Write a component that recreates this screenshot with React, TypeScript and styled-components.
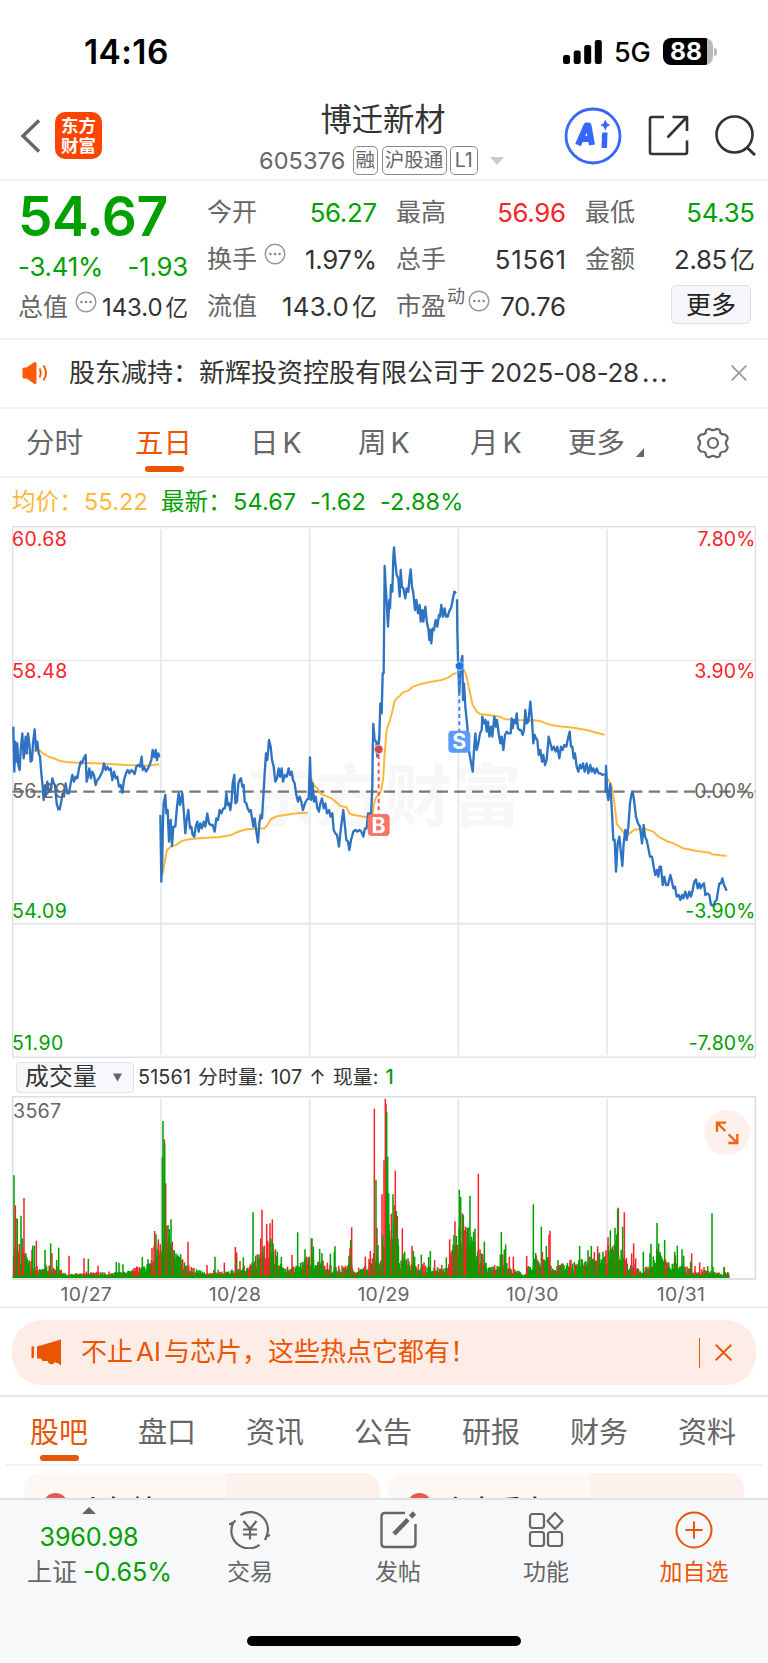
import React from 'react';
import styled, { createGlobalStyle, css } from 'styled-components';

const C = {
  green: '#00a000',
  red: '#f8242a',
  orange: '#ea5504',
  brand: '#ff4400',
  ink: '#333333',
  gray: '#666666',
  line: '#f1f1f4',
};

const Global = createGlobalStyle`
  * { box-sizing: border-box; }
  body { margin: 0; background: #fff; }
  body, svg text { font-family: Inter, "Noto Sans CJK SC", sans-serif; }
  svg { display: block; flex: none; }
`;

const Screen = styled.div`
  width: 768px;
  height: 1663px;
  display: flex;
  flex-direction: column;
  overflow: hidden;
  background: #fff;
  color: ${C.ink};
  white-space: nowrap;
`;

/* ---------- status bar ---------- */
const StatusBar = styled.div`
  height: 90px;
  padding: 13px 51px 0 84px;
  display: flex;
  align-items: center;
  color: #000;
  flex: none;
`;
const Clock = styled.div`
  flex: 1;
  font-size: 33.5px;
  font-weight: 600;
  letter-spacing: 0.4px;
`;
const Network = styled.div`
  width: 38px;
  margin: 1px 11px 0 12px;
  font-size: 27px;
  font-weight: 500;
  letter-spacing: -0.3px;
`;
const Battery = styled.div`
  width: 50px;
  height: 27px;
  border-radius: 8px;
  background: linear-gradient(90deg, #000 44px, #b9b9b9 44px);
  color: #fff;
  font-size: 24.5px;
  font-weight: 700;
  line-height: 27px;
  padding-left: 7px;
`;
const BatteryTip = styled.div`
  width: 3px;
  height: 8px;
  margin-left: 1px;
  border-radius: 0 3px 3px 0;
  background: #b9b9b9;
`;

/* ---------- header ---------- */
const Header = styled.header`
  height: 91px;
  padding: 2px 11px 0 20px;
  display: flex;
  align-items: center;
  border-bottom: 2px solid ${C.line};
  flex: none;
`;
const Logo = styled.div`
  width: 47px;
  height: 47px;
  margin-left: 14px;
  border-radius: 10px;
  background: ${C.brand};
  color: #fff;
  font: 700 17.500px/20px "Noto Sans CJK SC", sans-serif;
  text-align: center;
  padding-top: 3px;
`;
const TitleBlock = styled.div`
  width: 250px;
  height: 88px;
  margin-left: 156px;
  padding-top: 4px;
`;
const Title = styled.div`
  width: 250px;
  text-align: center;
  font-size: 31.3px;
  line-height: 48px;
`;
const CodeRow = styled.div`
  display: flex;
  align-items: center;
  height: 30px;
  margin: 2px 0 0 1px;
  font-size: 23.5px;
  color: ${C.gray};
`;
const Tag = styled.span<{ $w: number }>`
  width: ${(p) => p.$w}px;
  height: 29px;
  margin-right: 3.5px;
  border: 1.5px solid #8a8a8a;
  border-radius: 5px;
  font-size: 19.5px;
  line-height: 26px;
  text-align: center;
`;
const Code = styled.span`
  width: 93.5px;
  letter-spacing: 0.1px;
`;
const HeaderActions = styled.div`
  display: flex;
  align-items: center;
  margin-left: auto;
`;

/* ---------- quote ---------- */
const Quote = styled.section`
  height: 159px;
  padding: 8px 0 0 18px;
  display: grid;
  grid-template-columns: repeat(4, 170px);
  column-gap: 19px;
  border-bottom: 2px solid ${C.line};
  flex: none;
`;
const QuoteCol = styled.div`
  display: flex;
  flex-direction: column;
`;
const BigPrice = styled.div`
  height: 54px;
  font-size: 55px;
  font-weight: 600;
  line-height: 54px;
  letter-spacing: -0.5px;
  color: ${C.green};
`;
const Change = styled.div`
  height: 41px;
  display: flex;
  align-items: center;
  justify-content: space-between;
  padding-top: 6px;
  font-size: 25.8px;
  letter-spacing: -0.2px;
  color: ${C.green};
`;
const Cell = styled.div`
  height: 47.2px;
  display: flex;
  align-items: center;
`;
const Label = styled.span`
  font-size: 25px;
  line-height: 30px;
  margin-top: -2px;
  color: ${C.gray};
`;
const Sup = styled.sup`
  font-size: 18px;
  line-height: 18px;
  color: ${C.gray};
  align-self: flex-start;
  margin: 5px 0 0 1px;
`;
const Value = styled.span<{ $c?: string; $small?: boolean; $ls?: number }>`
  margin: 0 ${(p) => -(p.$ls ?? -0.3)}px 0 auto;
  font-size: ${(p) => (p.$small ? 24 : 25.8)}px;
  line-height: 30px;
  letter-spacing: ${(p) => p.$ls ?? -0.3}px;
  color: ${(p) => p.$c ?? C.ink};
`;
const Unit = styled.span<{ $small?: boolean }>`
  font-size: ${(p) => (p.$small ? 22.5 : 25)}px;
  margin-left: 3px;
`;
const MoreButton = styled.button`
  width: 80px;
  height: 39px;
  margin: -4px 4px 0 auto;
  padding: 0;
  border: 1.5px solid #dcdee6;
  border-radius: 5px;
  background: #f6f7fb;
  font: 25px/34px Inter, "Noto Sans CJK SC", sans-serif;
  color: #222;
`;

/* ---------- notice ---------- */
const Notice = styled.section`
  height: 69px;
  padding: 0 21px 1px 22px;
  display: flex;
  align-items: center;
  border-bottom: 2px solid ${C.line};
  flex: none;
`;
const NoticeText = styled.div`
  flex: 1;
  padding-left: 20px;
  font-size: 26px;
  line-height: 36px;
`;
const NoticeDate = styled.span`
  margin-left: 5px;
  letter-spacing: -0.25px;
`;
const Dots = styled.span`
  margin-left: 3px;
  letter-spacing: 1.6px;
`;

/* ---------- tabs ---------- */
const PeriodTabs = styled.nav`
  height: 69px;
  padding-left: 26px;
  display: grid;
  grid-template-columns: 109px 115px 108px 112px 98px 129px auto;
  justify-content: start;
  border-bottom: 2px solid ${C.line};
  flex: none;
`;
const tabBase = css<{ $on?: boolean }>`
  position: relative;
  justify-self: start;
  font-size: 28.5px;
  line-height: 66px;
  color: ${(p) => (p.$on ? C.orange : C.gray)};
  &::after {
    content: '';
    display: ${(p) => (p.$on ? 'block' : 'none')};
    position: absolute;
    left: 50%;
    bottom: 4px;
    width: 39px;
    height: 6px;
    margin-left: -19px;
    border-radius: 3px;
    background: ${C.orange};
  }
`;
const PeriodTab = styled.a`
  ${tabBase}
  display: flex;
  align-items: center;
  gap: 4px;
`;
const Legend = styled.div`
  height: 48px;
  padding-left: 12px;
  display: flex;
  align-items: center;
  font-size: 23.5px;
  line-height: 32px;
  flex: none;
`;
const LegendItem = styled.span<{ $c: string; $w: number }>`
  width: ${(p) => p.$w}px;
  letter-spacing: 0.1px;
  color: ${(p) => p.$c};
`;

/* ---------- charts ---------- */
const VolumeBar = styled.div`
  height: 38px;
  padding: 0 16px;
  display: flex;
  align-items: center;
  font-size: 19.8px;
  letter-spacing: 0.15px;
  line-height: 26px;
  flex: none;
`;
const IndicatorSelect = styled.div`
  width: 118px;
  height: 31px;
  margin-right: 4px;
  padding: 0 11px 0 8px;
  display: flex;
  align-items: center;
  justify-content: space-between;
  border: 1.5px solid #e0e2e8;
  border-radius: 4px;
  background: #f7f8fb;
  font-size: 23.8px;
  line-height: 28px;
`;
const Reading = styled.span`
  word-spacing: 1.2px;
`;
const Now = styled.span`
  color: ${C.green};
  font-weight: 500;
`;

/* ---------- promo + lower tabs ---------- */
const PromoWrap = styled.section`
  height: 89px;
  padding: 12px 12px 0;
  border-bottom: 2px solid #e6e7ee;
  flex: none;
`;
const Promo = styled.div`
  height: 65px;
  padding: 0 24px 0 19px;
  display: flex;
  align-items: center;
  border-radius: 30px;
  background: #fdede6;
  color: ${C.orange};
  font-size: 26px;
  line-height: 36px;
`;
const PromoText = styled.span`
  flex: 1;
  margin: -1px 0 0 18px;
`;
const Latin = styled.span`
  margin: 0 3px;
`;
const PromoDivider = styled.i`
  width: 1.5px;
  height: 30px;
  margin-right: 15px;
  background: ${C.orange};
`;
const InfoTabs = styled.nav`
  height: 69px;
  margin: 0 6px;
  padding: 0 26px 0 24px;
  display: flex;
  justify-content: space-between;
  border-bottom: 2px solid ${C.line};
  flex: none;
`;
const InfoTab = styled.a`
  ${tabBase}
  line-height: 71px;
  font-size: 29px;
  &::after {
    bottom: 3px;
  }
`;
const Cards = styled.section`
  height: 32px;
  padding: 7px 24px 0;
  display: flex;
  gap: 8px;
  overflow: hidden;
  flex: none;
`;
const Card = styled.div`
  flex: 1;
  height: 80px;
  padding: 20px 0 0 19px;
  display: flex;
  align-items: flex-start;
  gap: 12px;
  border-radius: 15px;
  background: linear-gradient(90deg, #fef8f4 0 57%, #fdf1ee 57%);
  font-size: 26px;
  color: #222;
`;
const CardDot = styled.i`
  width: 25px;
  height: 25px;
  border-radius: 50%;
  background: #e05a52;
`;
const CardTitle = styled.span`
  line-height: 34px;
  font-weight: 500;
`;

/* ---------- bottom bar ---------- */
const BottomBar = styled.footer`
  flex: 1;
  display: flex;
  flex-direction: column;
  align-items: center;
  justify-content: space-between;
  border-top: 2px solid #e2e3e5;
  background: #f7f8fa;
`;
const BottomItems = styled.div`
  width: 768px;
  height: 90px;
  padding-left: 5px;
  display: flex;
`;
const IndexBox = styled.div`
  width: 171px;
  padding: 7px 3px 0 0;
  display: flex;
  flex-direction: column;
  align-items: center;
  color: ${C.green};
  font-size: 25.2px;
  line-height: 35px;
`;
const IndexValue = styled.div`
  margin-top: 6px;
  letter-spacing: -0.2px;
`;
const IndexChange = styled.div`
  margin-left: 21px;
  display: flex;
  align-items: center;
  gap: 6px;
`;
const BottomItem = styled.div<{ $c?: string }>`
  width: 148px;
  padding-top: 11px;
  display: flex;
  flex-direction: column;
  align-items: center;
  font-size: 23px;
  line-height: 34px;
  gap: 6px;
  color: ${(p) => p.$c ?? C.gray};
`;
const HomeBar = styled.div`
  width: 274px;
  height: 10px;
  margin-bottom: 17px;
  border-radius: 5px;
  background: #000;
`;

/* ---------- chart data (three units per pixel) ---------- */
type Pt = [number, number];
const pts = (s: string, dx = 0, dy = 0): Pt[] =>
  s.trim().split(/\s+/).map((p) => {
    const [x, y] = p.split(',').map(Number);
    return [x + dx, y + dy] as Pt;
  });
const path = (p: Pt[]) => 'M' + p.map((a) => a.join(',')).join('L');

const PRICE: Pt[][] = [
  pts(`40,620 43,755 46,665 49,725 52,670 55,735 59,750 62,690 67,640 71,715 77,650 80,700 84,640 88,670 92,725 96,720 99,670 104,628 108,690 112,665 116,700 120,710 124,760 128,800 131,840 134,800 137,830 142,785 147,815 152,815 157,775 161,790 165,795 170,850 175,868 179,868 183,850 188,820 192,830 197,790 202,820 207,820 212,790 217,765 222,785 227,770 232,775 237,745 242,725 246,730 251,715 257,705 260,785 264,770 268,745 273,775 277,755 282,765 287,795 292,780 297,775 302,765 307,755 312,730 317,750 322,740 327,750 332,745 337,780 342,755 347,775 352,770 357,800 362,795 367,818 372,780 378,760 383,750 388,760 394,750 399,755 404,762 409,740 415,735 420,740 425,710 428,750 432,740 438,755 444,745 449,735 454,720 458,690 463,712 467,690 471,720 475,700 478,712`),
  pts(`481,885 484,1085 487,1010 489,900 491,850 496,825 499,880 503,870 507,965 512,900 516,978 520,920 526,920 531,860 536,820 540,855 547,820 551,870 556,940 560,900 565,870 570,925 574,920 578,945 583,950 587,920 592,905 596,935 601,910 606,925 611,905 616,920 622,880 627,910 632,915 638,915 644,935 649,895 654,900 659,870 664,880 670,865 675,865 679,820 683,855 687,850 691,870 695,840 698,790 703,765 706,850 711,845 715,790 719,780 723,775 727,800 731,795 734,845 739,850 743,865 748,875 752,870 757,900 760,920 764,895 769,935 774,968 778,910 782,885 786,895 790,830 794,760 798,700 802,720 807,660 812,680 816,720 821,740 826,785 831,775 836,745 840,770 845,745 849,785 855,765 860,770 866,745 870,765 875,755 879,780 884,790 889,825 894,845 899,830 904,845 909,870 915,850 920,840 925,835`),
  [
    ...pts(`926,840 930,712 934,840 938,790 942,845 947,830 952,865 957,875 961,850 966,835 971,865 976,850 981,880 987,870 992,890 997,880 1001,930 1006,940 1011,945 1017,980 1022,930 1030,870 1034,910 1039,960 1044,965 1048,990 1053,960 1060,935 1066,930 1072,935 1078,930 1084,935 1090,950 1095,925 1100,925 1104,880 1109,880 1113,890`),
    ...pts(`217,800 218,700 220,612 224,660 229,665 232,710 235,690 238,650 241,550 245,580 248,460 251,460 254,138 257,200 260,245 264,320 268,240 270,265 273,195 277,215 280,110 282,82 286,130 290,165 295,175 299,230 302,150 306,200 310,205 316,235 320,205 325,215 329,170 332,148 336,200 340,220 345,270 349,240 354,280 359,255 362,305 367,270 370,305 376,260 381,310 385,325 388,360 391,330 394,370 398,325 402,330 407,300 412,320 417,285 420,290 424,255 429,290 434,265 438,290 443,290 449,270 453,265 458,240 463,215 468,220`, 900),
  ],
  [
    ...pts(`471,238 472,330 474,420 478,520 482,430 487,408 489,540 492,490 496,560 502,620 505,680 510,710 518,755 522,690 526,640 530,690 535,670 540,640 545,630 547,590 552,610 556,600 560,635 564,605 568,650 573,620 577,650 583,590 587,620 591,600 596,640 601,670 605,650 610,690 615,645 620,635 625,640`, 900),
    ...pts(`182,280 185,235 188,265 192,240 197,250 200,220 204,265 208,270 213,270 218,285 222,270 226,210 230,250 235,245 241,185 246,240 250,310 254,285 258,295 262,300 266,345 271,330 276,365 280,345 285,375 290,360 296,290 301,310 306,330 311,320 317,335 322,320 328,355 333,320 338,330 343,315 349,320 354,295 359,275 363,320 367,320 371,355 375,340 380,380 385,395 390,375 394,385 399,370 404,395 410,370 415,400 421,375 425,395 430,385 435,400 440,385 446,400 452,400 457,405 464,402`, 1350, 360),
  ],
  pts(`467,402 467,455 468,378 472,460 475,480 481,432 486,520 490,600 494,600 498,695 503,610 508,590 513,640 517,678 521,610 526,570 530,600 535,560 540,490 545,460 548,455 552,480 558,530 564,550 570,560 576,610 581,555 585,590 590,600 595,625 600,650 606,650 611,680 616,705 621,690 625,710 629,680 633,680 638,735 643,710 648,735 654,735 661,705 665,720 670,745 675,740 680,770 686,765 691,780 696,765 700,775 706,755 712,775 718,755 723,770 728,750 733,725 738,718 743,745 748,730 752,745 757,735 762,730 766,765 772,760 778,765 783,795 789,797 795,785 800,780 803,760 808,730 813,730 817,715 822,735 830,752`, 1350, 360),
];

const AVERAGE: Pt[][] = [
  pts('64,704 80,700 100,694 120,692 128,700 140,706 150,712 165,716 180,723 200,726 230,728 280,730 330,732 380,735 410,736 440,737 478,733'),
  pts('488,1062 495,1020 501,990 512,980 530,974 545,963 570,957 610,954 660,951 695,945 705,939 720,933 740,928 770,926 793,925 803,915 813,897 830,889 860,884 890,880 924,878'),
  [
    ...pts('934,775 941,795 952,805 960,820 975,827 995,835 1010,848 1022,858 1040,862 1048,880 1060,885 1080,888 1095,891 1110,890 1118,880'),
    ...pts('221,860 225,838 232,828 241,818 246,800 250,770 254,700 260,630 270,600 278,570 283,545 290,535 300,527 308,518 325,512 338,500 360,493 390,486 425,480 445,473 460,462 470,460', 900),
  ],
  [
    ...pts('486,440 498,462 508,510 518,555 530,575 540,582 570,586 600,590 615,598 650,600 700,601', 900),
    ...pts('270,243 295,253 320,258 370,263 410,270 440,278 464,284', 1350, 360),
  ],
  pts('470,410 485,440 492,480 498,530 500,552 512,565 522,580 535,583 552,570 570,567 590,568 610,575 625,590 650,603 670,610 700,625 740,633 780,638 785,643 830,648', 1350, 360),
];

type Bar = { x: number; top: number; up: boolean };
const bars = (s: string, dx = 0): Bar[] =>
  s.trim().split(/\s+/).map((b) => {
    const [x, y] = b.slice(0, -1).split(',').map(Number);
    return { x: x + dx, top: y, up: b.endsWith('r') };
  });

const PEAKS: Bar[] = [
  ...bars(`42,286g 46,376r 48,415r 52,416g 58,492r 63,407g 67,475g 72,354r 68,500r 76,520g 96,510r 98,497g 103,497g 109,482r 135,510g 152,490g 156,520r 170,540g 176,503g 207,527r 252,535r 265,537g 294,557r 349,546g 357,548g 369,553g 427,531g 444,538g 456,504r 464,453r 468,463g 475,478r 472,510g 481,493r 487,232g 493,178r 489,123g 497,310r 494,190g 500,438r 504,435g 508,447g 513,418g 517,485r 522,510g 528,520g 542,523g 546,538r 564,485r 621,555r 645,530g 673,548r 706,501r 710,517r 709,536g 720,543r 730,532g 759,397g 767,527g 782,475r 786,389r 789,501g 793,497r 800,432r 803,482r 810,430r 817,418r 813,476g 819,490g 832,515g 844,531g 876,525r 893,457g 915,508g 920,530r 928,530g 934,475r 936,475g 940,500g 959,507g 966,520g 991,521g 1005,499g 1003,515g 1055,442r 1052,480g 1050,505r 1047,527g 1096,530r 1111,513r 1121,520r 1123,86r 1131,444r 1128,299g 1134,495g 1146,343r 1152,241r 1148,467g 1156,56r 1158,72r 1160,95g 1163,230g 1166,340g`),
  ...bars(`59,453g 62,497g 64,401r 73,375r 76,272r 69,343g 72,425g 82,408r 79,393g 84,476g 97,445r 99,521g 104,515g 109,538g 126,498r 130,513g 134,530g 154,524g 162,547r 176,531g 181,513g 194,540r 229,532g 239,478r 243,515r 249,520r 255,424r 252,465g 259,468g 263,495r 268,329g 272,351g 277,400r 280,405g 284,450r 287,440r 292,443g 296,443g 300,347g 305,470g 311,455g 315,446g 325,281r 323,515g 330,508r 334,520g 338,522r 343,485g 394,456g 398,523r 391,524g 407,493g 403,508g 418,530r 430,530r 470,528r 490,373g 493,536g 497,519g 514,440g 517,516r 529,498g 537,464r 540,452r 533,532g 564,541g 600,541r 629,498g 638,548g 654,511g 664,498g 683,499r 699,515g 708,511r 714,472r 717,513g 721,451g 735,443g 740,463g 745,383r 743,387g 758,440g 763,397r 767,545r 785,520r 791,490r 797,535r 820,515g 840,520g 843,491g 861,429g 866,490g 870,515g 884,480g 886,538r 896,547g 916,526r 914,515g 922,497g 936,508g 941,527g 965,520r 962,545g 975,558r 989,547r 1002,561r 1013,558g 1026,400g 1029,560g 1063,560r 1062,563g`, 1110),
];

const ENVELOPE = pts('40,90 60,75 90,50 110,30 150,35 180,25 200,12 260,15 330,15 400,25 450,40 470,100 500,110 515,95 540,60 570,30 620,18 690,20 740,30 760,40 790,85 820,90 840,40 870,25 930,60 960,50 1000,30 1040,30 1050,60 1060,25 1090,25 1118,60 1135,80 1142,50 1150,130 1165,160 1180,110 1195,95 1200,40 1215,75 1235,35 1290,30 1340,30 1355,80 1370,125 1380,170 1400,135 1425,110 1435,65 1455,50 1465,30 1500,38 1505,65 1520,42 1540,20 1560,20 1570,8 1600,55 1640,55 1660,38 1690,38 1760,55 1780,65 1830,85 1840,120 1855,120 1870,60 1890,40 1930,20 1950,45 1970,75 2000,45 2040,45 2060,28 2100,20 2130,22 2160,12 2188,18');

const levelAt = (x: number) => {
  const i = Math.max(1, ENVELOPE.findIndex((p) => p[0] >= x));
  const [a, b] = [ENVELOPE[i - 1], ENVELOPE[i]];
  return a[1] + ((b[1] - a[1]) * (x - a[0])) / (b[0] - a[0]);
};

const FLOOR: Bar[] = (() => {
  let seed = 17;
  const rnd = () => (seed = (seed * 16807) % 2147483647) / 2147483647;
  const out: Bar[] = [];
  for (let x = 41; x < 2187; x += 2.6) {
    const up = rnd() < 0.34;
    const k = 0.5 + 0.65 * rnd();
    out.push({ x, top: 593 - levelAt(x) * k * (up ? 1.1 : 0.95), up });
  }
  return out;
})();

const GRID_X = [483, 929, 1375, 1821];

const PriceChart = () => (
  <svg width="768" height="532" viewBox="0 18 2304 1596">
    <g fill="#f7f7f8" fontSize="206" fontWeight="700">
      <text x="738" y="902" textLength="826" style={{ fontFamily: '"Noto Sans CJK SC"' }}>东方财富</text>
    </g>
    <g stroke="#e4e7ef" strokeWidth="5" fill="none">
      {GRID_X.map((x) => <path key={x} d={`M${x},27V1605`} />)}
      <path d="M38,421H2266" strokeWidth="3.5" />
      <path d="M38,1211H2266" strokeWidth="6" />
      <path d="M38,1614V20H2266V1614" stroke="#dcdee3" strokeWidth="4" />
      <path d="M38,1612H2266" stroke="#e2e3e6" strokeWidth="5" />
    </g>
    <path d="M38,815H2266" stroke="#777" strokeWidth="6.500" strokeDasharray="34 19" />
    <g fill="none" strokeLinejoin="round">
      {AVERAGE.map((p, i) => <path key={i} d={path(p)} stroke="#fdb73a" strokeWidth="6" />)}
      {PRICE.map((p, i) => <path key={i} d={path(p)} stroke="#2e73c2" strokeWidth="7" />)}
    </g>
    <g fontSize="58.500" letterSpacing="1.200">
      <text x="36" y="77" fill={C.red}>60.68</text>
      <text x="36" y="475" fill={C.red}>58.48</text>
      <text x="36" y="834" fill={C.gray}>56.29</text>
      <text x="36" y="1193" fill={C.green}>54.09</text>
      <text x="36" y="1590" fill={C.green}>51.90</text>
    </g>
    <g fontSize="58.500" letterSpacing="0.500" textAnchor="end">
      <text x="2267" y="77" fill={C.red}>7.80%</text>
      <text x="2267" y="475" fill={C.red}>3.90%</text>
      <text x="2267" y="834" fill={C.gray}>0.00%</text>
      <text x="2267" y="1193" fill={C.green}>-3.90%</text>
      <text x="2267" y="1590" fill={C.green}>-7.80%</text>
    </g>
    <path d="M1136,705V885" stroke="#f4524d" strokeWidth="6" strokeDasharray="12 10" />
    <path d="M1378,450V640" stroke="#3d86f5" strokeWidth="6" strokeDasharray="12 10" />
    <circle cx="1136" cy="688" r="13" fill="#cb4a52" stroke="#e9c4c8" strokeWidth="3" />
    <circle cx="1379" cy="438" r="13" fill="#1f74f0" stroke="#c9dcf9" strokeWidth="3" />
    <rect x="1103" y="882" width="66" height="66" rx="12" fill="#fb7468" />
    <rect x="1345" y="632" width="66" height="66" rx="12" fill="#5a9bfb" />
    <g fill="#fff" fontSize="64" fontWeight="700" textAnchor="middle">
      <text x="1136" y="938">B</text>
      <text x="1378" y="688">S</text>
    </g>
  </svg>
);

const VolumeChart = () => (
  <svg width="768" height="212" viewBox="0 48 2304 636">
    <g stroke="#e4e7ef" strokeWidth="5" fill="none">
      {GRID_X.map((x) => <path key={x} d={`M${x},56V595`} />)}
      <path d="M38,597V50H2266V597" stroke="#dcdee3" strokeWidth="5" />
      <path d="M36,597H2268" stroke="#dfe0e5" strokeWidth="6" />
    </g>
    {[...FLOOR, ...PEAKS].map((b, i) => (
      <path key={i} d={`M${b.x},594V${b.top}`} stroke={b.up ? C.red : C.green} strokeWidth="4.600" />
    ))}
    <path d="M38,590H2188" stroke={C.green} strokeWidth="6" />
    <text x="39" y="113" fontSize="59" fill={C.gray} letterSpacing="0.800">3567</text>
    <circle cx="2181" cy="158" r="68" fill="#fef1eb" />
    <g stroke="#f06413" strokeWidth="7" fill="none">
      <path d="M2151,155V128H2178M2151,128L2176,153" />
      <path d="M2185,189H2212V162M2212,189L2186,163" />
    </g>
    <g fontSize="58" fill={C.gray} textAnchor="middle" letterSpacing="1">
      {['10/27', '10/28', '10/29', '10/30', '10/31'].map((d, i) => (
        <text key={d} x={259 + i * 446} y="662">{d}</text>
      ))}
    </g>
    <path d="M0,682H2304" stroke="#e4e4e6" strokeWidth="4" />
  </svg>
);

/* ---------- icons ---------- */
const Hint = ({ ml = 7 }: { ml?: number }) => (
  <svg width="22" height="22" viewBox="0 0 22 22" style={{ marginLeft: ml, marginTop: -11 }}>
    <circle cx="11" cy="11" r="9.8" fill="none" stroke="#999" strokeWidth="1.5" />
    {[6.4, 11, 15.6].map((x) => <circle key={x} cx={x} cy="11" r="1.3" fill="#888" />)}
  </svg>
);
const Cross = ({ color, w }: { color: string; w: number }) => (
  <svg width={w} height={w} viewBox="0 0 16 16" fill="none" stroke={color} strokeWidth="1.7">
    <path d="M.7.7 15.3 15.3M15.3.7.7 15.3" />
  </svg>
);

export default function App() {
  return (
    <Screen>
      <Global />
      <StatusBar>
        <Clock>14:16</Clock>
        <svg width="39" height="26" viewBox="0 0 39 26">
          <rect x="0" y="16" width="7" height="9" rx="2.2" />
          <rect x="10.7" y="11.5" width="7" height="13.5" rx="2.2" />
          <rect x="21.2" y="6" width="7" height="19" rx="2.2" />
          <rect x="31.8" y="1" width="7" height="24" rx="2.2" />
        </svg>
        <Network>5G</Network>
        <Battery>88</Battery>
        <BatteryTip />
      </StatusBar>

      <Header>
        <svg width="21" height="34" viewBox="0 0 21 34" fill="none" stroke="#666" strokeWidth="3.4">
          <path d="M19 1.5 3 17 19 32.5" />
        </svg>
        <Logo>东方<br />财富</Logo>
        <TitleBlock>
          <Title>博迁新材</Title>
          <CodeRow>
            <Code>605376</Code>
            <Tag $w={25.5}>融</Tag>
            <Tag $w={65}>沪股通</Tag>
            <Tag $w={27.5}>L1</Tag>
            <svg width="14" height="8" viewBox="0 0 14 8" style={{ marginLeft: 9 }}>
              <path d="M0 0H14L7 8Z" fill="#ccc" />
            </svg>
          </CodeRow>
        </TitleBlock>
        <HeaderActions>
          <svg width="58" height="58" viewBox="0 0 58 58">
            <circle cx="29" cy="29" r="27" fill="none" stroke="#3568fa" strokeWidth="2.8" />
            <path d="M14 38 22.500 18.500H24.500L28 38M18 32H26" fill="none" stroke="#3568fa" strokeWidth="6" strokeLinejoin="round" />
            <path d="M38.500 25.500H43.500L43 41H37.500L38 30H37.500Z" fill="#3568fa" />
            <path d="M41.300 12.500 43 16.200 46.300 18 43 19.800 41.300 23.500 39.600 19.800 36.300 18 39.600 16.200Z" fill="#3568fa" />
          </svg>
          <svg width="41" height="41" viewBox="0 0 41 41" fill="none" stroke={C.ink} strokeWidth="2.6" style={{ marginLeft: 26 }}>
            <path d="M16 2H4Q2 2 2 4V37Q2 39 4 39H37Q39 39 39 37V25.500M24.500 2H39V16M39 2 19.500 22.500" strokeLinejoin="round" />
          </svg>
          <svg width="42" height="41" viewBox="0 0 42 41" fill="none" stroke={C.ink} strokeWidth="2.6" style={{ marginLeft: 26 }}>
            <circle cx="19.500" cy="19.500" r="18" />
            <path d="M32 32.500 40 40" strokeWidth="3" />
          </svg>
        </HeaderActions>
      </Header>

      <Quote>
        <QuoteCol>
          <BigPrice>54.67</BigPrice>
          <Change><span>-3.41%</span><span>-1.93</span></Change>
          <Cell>
            <Label>总值</Label><Hint />
            <Value $small $ls={-0.1}>143.0<Unit $small>亿</Unit></Value>
          </Cell>
        </QuoteCol>
        <QuoteCol>
          <Cell><Label>今开</Label><Value $c={C.green}>56.27</Value></Cell>
          <Cell><Label>换手</Label><Hint /><Value>1.97%</Value></Cell>
          <Cell><Label>流值</Label><Value $ls={0.3}>143.0<Unit>亿</Unit></Value></Cell>
        </QuoteCol>
        <QuoteCol>
          <Cell><Label>最高</Label><Value $c={C.red}>56.96</Value></Cell>
          <Cell><Label>总手</Label><Value $ls={0.7}>51561</Value></Cell>
          <Cell><Label>市盈</Label><Sup>动</Sup><Hint ml={3} /><Value>70.76</Value></Cell>
        </QuoteCol>
        <QuoteCol>
          <Cell><Label>最低</Label><Value $c={C.green}>54.35</Value></Cell>
          <Cell><Label>金额</Label><Value>2.85<Unit>亿</Unit></Value></Cell>
          <Cell><MoreButton>更多</MoreButton></Cell>
        </QuoteCol>
      </Quote>

      <Notice>
        <svg width="27" height="22" viewBox="0 0 27 22" fill="none" stroke="#ff5a0a" strokeWidth="2">
          <path d="M2 7H5L13 1.500V20.500L5 15H2Z" fill="#ff5a0a" strokeWidth="3" strokeLinejoin="round" />
          <path d="M17.500 6.500Q20 11 17.500 15.500M21.500 3.500Q26.500 11 21.500 18.500" />
        </svg>
        <NoticeText>
          股东减持：新辉投资控股有限公司于<NoticeDate>2025-08-28</NoticeDate><Dots>...</Dots>
        </NoticeText>
        <Cross color="#999" w={16} />
      </Notice>

      <PeriodTabs>
        <PeriodTab>分时</PeriodTab>
        <PeriodTab $on>五日</PeriodTab>
        <PeriodTab>日<span>K</span></PeriodTab>
        <PeriodTab>周<span>K</span></PeriodTab>
        <PeriodTab>月<span>K</span></PeriodTab>
        <PeriodTab>
          更多
          <svg width="8" height="9" viewBox="0 0 8 9" style={{ margin: '19px 0 0 7px' }}><path d="M8 0V9H0Z" fill="#666" /></svg>
        </PeriodTab>
        <PeriodTab>
          <svg width="32" height="32" viewBox="0 0 32 32" fill="none" stroke="#666" strokeWidth="2.200">
            <path d="M12.500 1.800Q16 4.500 19.500 1.800Q23.500 2 23.200 5.500Q24 7.500 28 7.500Q31 9.500 30.600 12Q27.200 16 30.600 20Q31 22.500 28 24.500Q24 24.500 23.200 26.500Q23.500 30 19.500 30.200Q16 27.500 12.500 30.200Q8.500 30 8.800 26.500Q8 24.500 4 24.500Q1 22.500 1.400 20Q4.800 16 1.400 12Q1 9.500 4 7.500Q8 7.500 8.800 5.500Q8.500 2 12.500 1.800Z" strokeLinejoin="round" />
            <circle cx="16" cy="16" r="5" />
          </svg>
        </PeriodTab>
      </PeriodTabs>

      <Legend>
        <LegendItem $c="#fdb73a" $w={72}>均价：</LegendItem>
        <LegendItem $c="#fdb73a" $w={77}>55.22</LegendItem>
        <LegendItem $c={C.green} $w={72}>最新：</LegendItem>
        <LegendItem $c={C.green} $w={77}>54.67</LegendItem>
        <LegendItem $c={C.green} $w={70}>-1.62</LegendItem>
        <LegendItem $c={C.green} $w={90}>-2.88%</LegendItem>
      </Legend>

      <PriceChart />
      <VolumeBar>
        <IndicatorSelect>
          成交量
          <svg width="9" height="9" viewBox="0 0 9 9"><path d="M0 .5H9L4.500 8.500Z" fill="#666" /></svg>
        </IndicatorSelect>
        <Reading>51561 分时量: 107 ↑ 现量: <Now>1</Now></Reading>
      </VolumeBar>
      <VolumeChart />

      <PromoWrap>
        <Promo>
          <svg width="32" height="27" viewBox="0 0 32 27" fill={C.orange}>
            <path d="M.5 7.500H3V19H.5ZM6 7.500 30 .5V26.500L27.500 24.500 23.500 23V24Q21 26 18 24.500L16.500 22H11.500L10 19.500H6Z" />
          </svg>
          <PromoText>不止<Latin>AI</Latin>与芯片，这些热点它都有！</PromoText>
          <PromoDivider />
          <Cross color={C.orange} w={17} />
        </Promo>
      </PromoWrap>

      <InfoTabs>
        {['股吧', '盘口', '资讯', '公告', '研报', '财务', '资料'].map((t, i) => (
          <InfoTab key={t} $on={i === 0}>{t}</InfoTab>
        ))}
      </InfoTabs>

      <Cards>
        <Card><CardDot /><CardTitle>人气榜</CardTitle></Card>
        <Card><CardDot /><CardTitle>主力看盘</CardTitle></Card>
      </Cards>

      <BottomBar>
        <BottomItems>
          <IndexBox>
            <svg width="14" height="7" viewBox="0 0 14 7"><path d="M7 0 14 7H0Z" fill="#666" /></svg>
            <IndexValue>3960.98</IndexValue>
            <IndexChange><Label>上证</Label>-0.65%</IndexChange>
          </IndexBox>
          <BottomItem>
            <svg width="42" height="38" viewBox="0 0 42 38" fill="none" stroke="#666" strokeWidth="2.200">
              <path d="M11.500 4.200A17.500 17.500 0 0 1 37.500 25.500L41 24M37.500 25.500 36 29" />
              <path d="M30.500 33.800A17.500 17.500 0 0 1 4.500 11.500L0 13.500M4.500 11.500 6.500 9.500" />
              <path d="M14.500 10 21 18 27.500 10M21 18V28.500M14 18.500H28M14 23.500H28" />
            </svg>
            交易
          </BottomItem>
          <BottomItem>
            <svg width="37" height="38" viewBox="0 0 37 38" fill="none" stroke="#666" strokeWidth="2.400">
              <path d="M25 2H5Q1.500 2 1.500 5.500V32.500Q1.500 36 5 36H32Q35.500 36 35.500 32.500V13" />
              <path d="M14 23 28 8.500" strokeWidth="4.600" />
              <path d="M30.500 6 34.500 2" strokeWidth="4.600" />
            </svg>
            发帖
          </BottomItem>
          <BottomItem>
            <svg width="36" height="38" viewBox="0 0 36 38" fill="none" stroke="#666" strokeWidth="2.200">
              <rect x="2" y="3" width="14" height="14" rx="2.500" />
              <path d="M27 2 34.500 10 27 18 19.500 10Z" strokeLinejoin="round" />
              <rect x="2" y="21" width="14" height="14" rx="2.500" />
              <rect x="20" y="21" width="14" height="14" rx="2.500" />
            </svg>
            功能
          </BottomItem>
          <BottomItem $c={C.orange}>
            <svg width="38" height="38" viewBox="0 0 38 38" fill="none" stroke={C.orange} strokeWidth="2">
              <circle cx="19" cy="19" r="17.500" />
              <path d="M10.500 19H27.500M19 10.500V27.500" />
            </svg>
            加自选
          </BottomItem>
        </BottomItems>
        <HomeBar />
      </BottomBar>
    </Screen>
  );
}
